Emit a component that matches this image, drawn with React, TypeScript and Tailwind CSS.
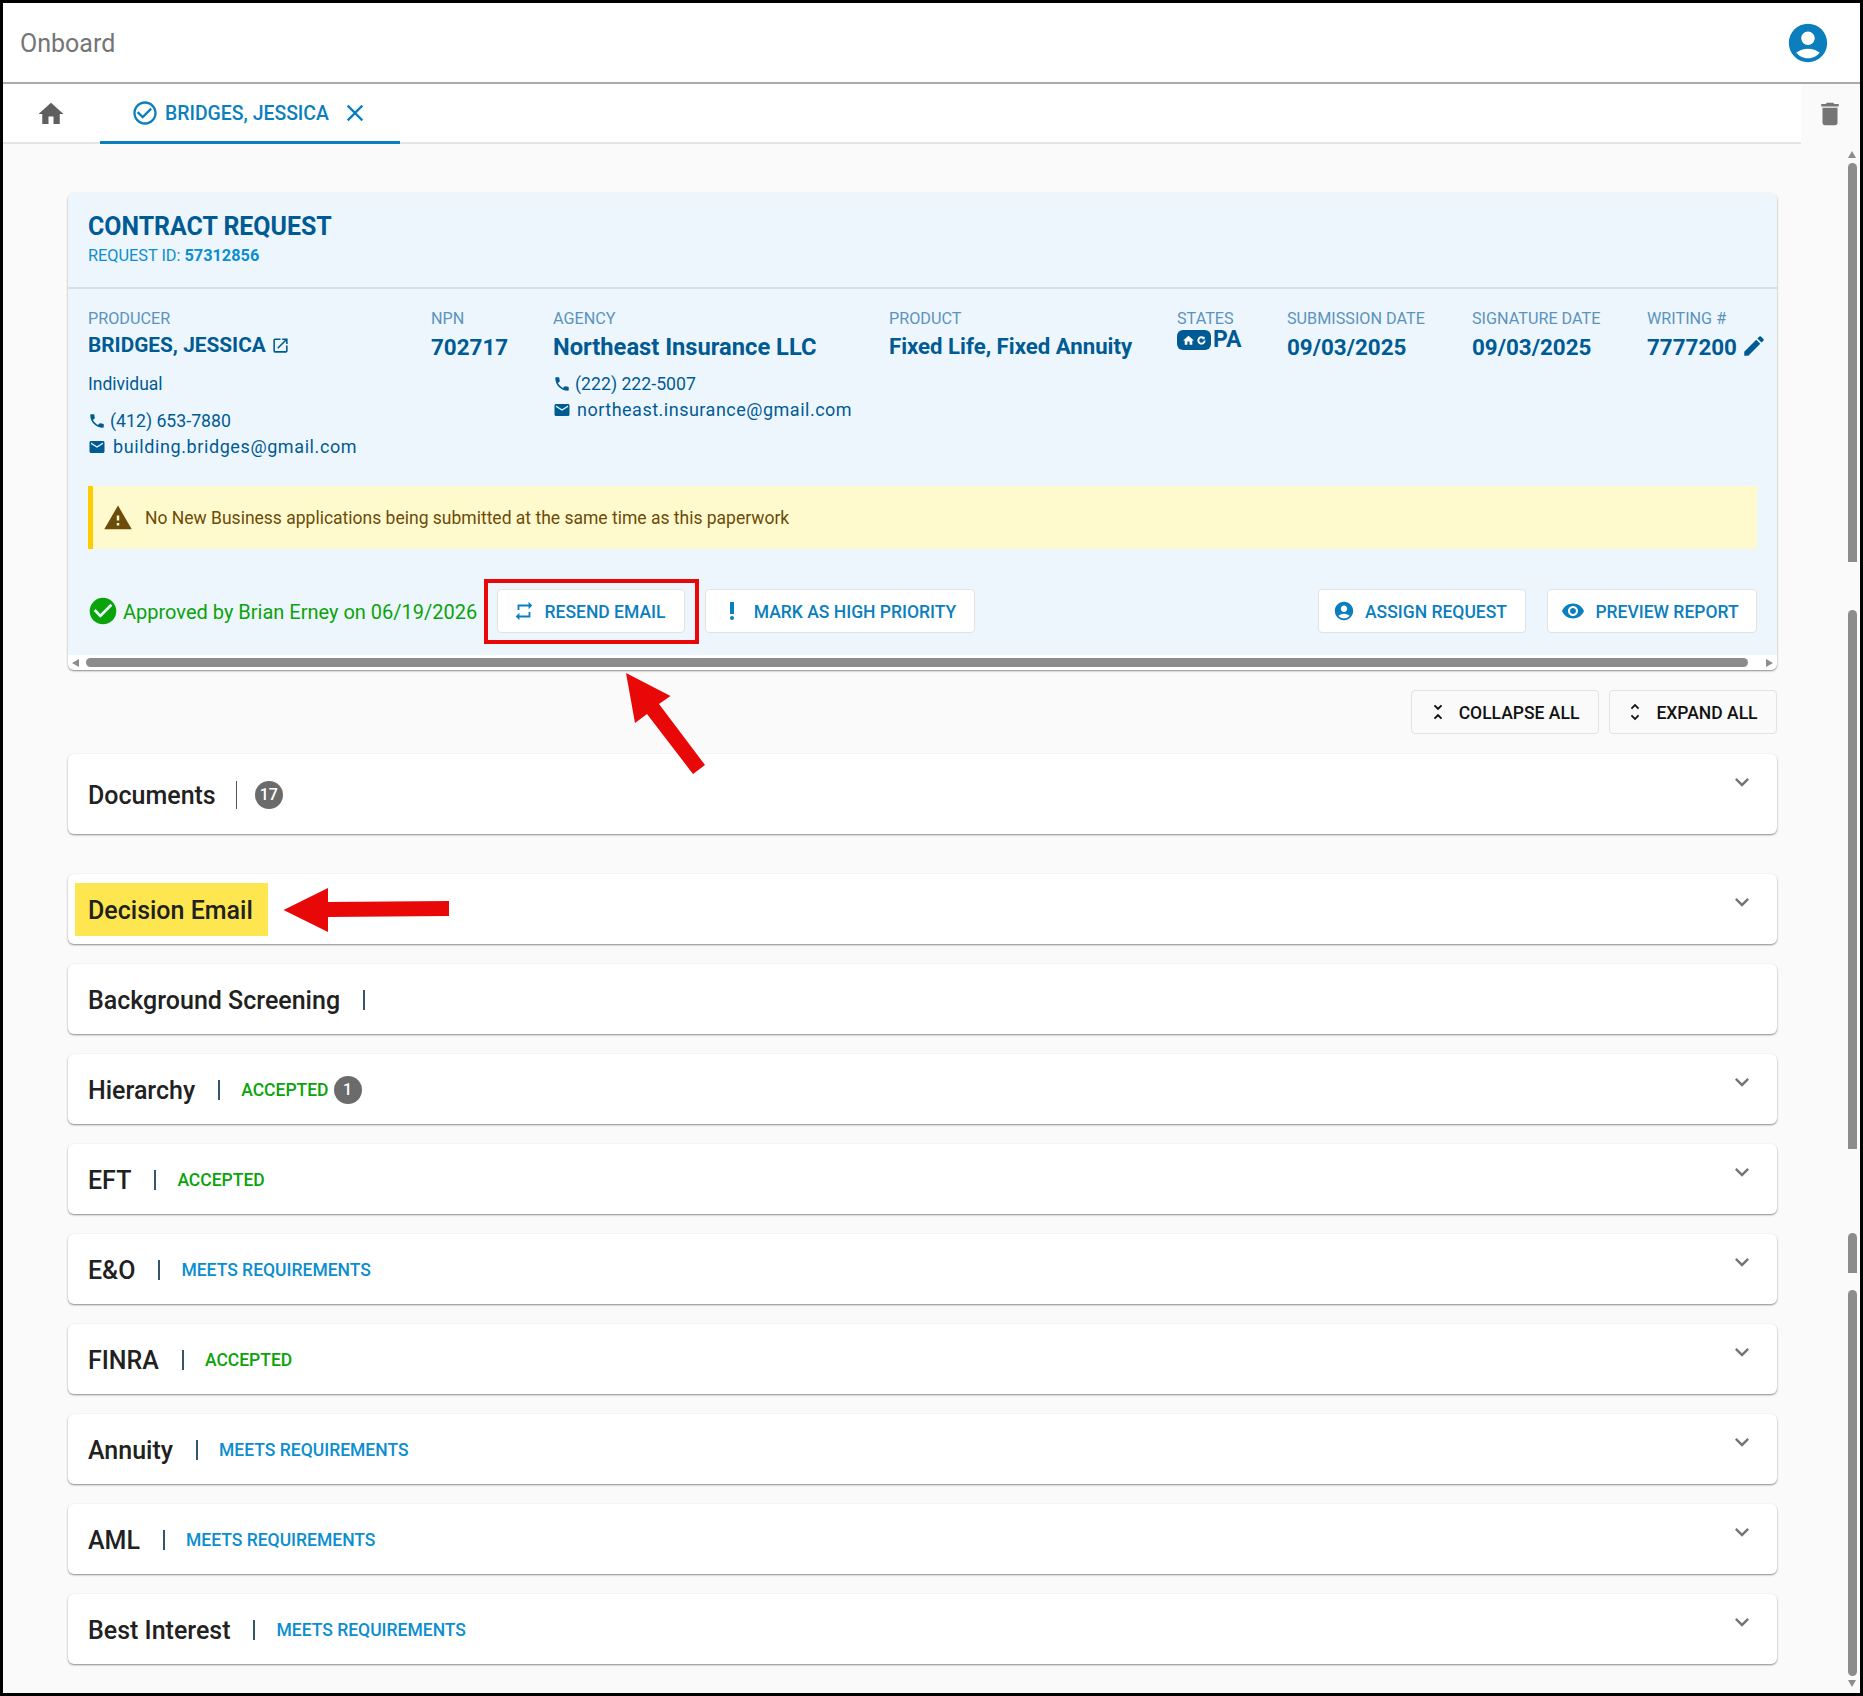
import React from "react";
import {
  MdHome, MdDelete, MdAccountCircle, MdClose, MdCheckCircleOutline, MdOpenInNew, MdPhone, MdEmail, MdWarning,
  MdRepeat, MdPriorityHigh, MdVisibility, MdUnfoldLess, MdUnfoldMore, MdExpandMore, MdEdit, MdCheckCircle,
} from "react-icons/md";

const Label = ({ children }: { children: React.ReactNode }) => (
  <div className="text-[16.2px] leading-[18px] text-[#5b93bd] whitespace-nowrap pt-[1px] -mb-[1px]">{children}</div>
);

const Btn = ({ icon, text, w, dark }: { icon: React.ReactNode; text: string; w: string; dark?: boolean }) => (
  <button className={`${w} h-[44px] rounded-[4px] border border-[#e2e2e2] flex items-center justify-center gap-[10px] text-[17.5px] font-medium whitespace-nowrap shrink-0 pr-[4px] ${dark ? "text-[#111111] bg-[#fafafa]" : "text-[#0b7fbd] bg-white"}`}>
    {icon}
    <span className="pt-[2px]">{text}</span>
  </button>
);

type Row = { title: string; status?: string; kind?: "a" | "m"; badge?: string; noChevron?: boolean };

const rows: Row[] = [
  { title: "Background Screening", noChevron: true },
  { title: "Hierarchy", status: "ACCEPTED", kind: "a", badge: "1" },
  { title: "EFT", status: "ACCEPTED", kind: "a" },
  { title: "E&O", status: "MEETS REQUIREMENTS", kind: "m" },
  { title: "FINRA", status: "ACCEPTED", kind: "a" },
  { title: "Annuity", status: "MEETS REQUIREMENTS", kind: "m" },
  { title: "AML", status: "MEETS REQUIREMENTS", kind: "m" },
  { title: "Best Interest", status: "MEETS REQUIREMENTS", kind: "m" },
];

const Chevron = () => <MdExpandMore className="self-start mt-[14px] text-[#757575] shrink-0" size={28} />;

const Badge = ({ n }: { n: string }) => (
  <span className="w-[28px] h-[28px] rounded-full bg-[#6b6b6b] text-white text-[16px] font-medium flex items-center justify-center">{n}</span>
);

const AccRow = ({ r }: { r: Row }) => (
  <div className="h-[70px] bg-white rounded-[6px] shadow-[0_1px_2px_rgba(0,0,0,0.45)] flex items-center justify-between pl-5 pr-[21px]">
    <div className="flex items-center pt-[2px]">
      <span className="text-[25px] font-medium text-[#212121] pt-[2px]">{r.title}</span>
      <span className="w-[2px] h-[20px] bg-[#33556e] ml-[23px] mr-[21px]" />
      {r.status && (
        <span className={`text-[17.5px] font-medium ${r.kind === "a" ? "text-[#0aa30a]" : "text-[#0b8ecf]"}`}>{r.status}</span>
      )}
      {r.badge && <span className="ml-[5px]"><Badge n={r.badge} /></span>}
    </div>
    {!r.noChevron && <Chevron />}
  </div>
);

const Bar = ({ className }: { className: string }) => <div className={`absolute bg-[#8c8c8c] ${className}`} />;

export default function App() {
  return (
    <div className="relative w-[1863px] h-[1696px] border-[3px] border-black bg-[#fafafa] flex flex-col overflow-hidden font-['Roboto',sans-serif]">
      <header className="h-[81px] shrink-0 bg-white border-b-2 border-[#aaaaaa] flex items-center justify-between pl-[17px] pr-[29px]">
        <span className="text-[25px] text-[#757575] pt-[2px]">Onboard</span>
        <MdAccountCircle size={46} className="text-[#0b7fbd] mt-[1px]" />
      </header>

      <nav className="h-[60px] shrink-0 bg-white flex items-stretch border-b-2 border-[#e4e4e4] mr-[59px] relative">
        <div className="w-[97px] flex items-center justify-center pr-[2px] pt-[2px]">
          <MdHome size={30} className="text-[#5f5f5f]" />
        </div>
        <div className="w-[300px] flex items-center pl-[31px] gap-[6px] border-b-[3px] border-[#0b7fbd] -mb-[2px] text-[#0b7fbd]">
          <MdCheckCircleOutline size={28} />
          <span className="text-[19.4px] font-medium whitespace-nowrap pt-[2px]">BRIDGES, JESSICA</span>
          <MdClose size={28} className="ml-[6px]" />
        </div>
      </nav>
      <MdDelete size={30} className="absolute right-[15px] top-[96px] text-[#757575]" />

      <main className="flex-1 pl-[65px] pr-[83px] pt-[49px]">
        <section className="rounded-[6px] bg-white shadow-[0_1px_2px_rgba(0,0,0,0.45)] relative h-[477px]">
          <div className="h-[462px] bg-[#eef6fd] rounded-t-[6px]">
            <div className="h-[96px] border-b-2 border-[#d5dfe7] px-5 pt-[18px]">
              <div className="text-[24.9px] leading-[32px] font-bold text-[#005b94]">CONTRACT REQUEST</div>
              <div className="text-[16.3px] leading-[20px] mt-[3px] font-normal text-[#0b8ecf]">REQUEST ID: <span className="font-bold">57312856</span></div>
            </div>

            <div className="flex px-5 pt-[20px] h-[197px] text-[#005b94]">
              <div className="w-[343px] shrink-0">
                <Label>PRODUCER</Label>
                <div className="flex items-center gap-[5px] mt-[3px] text-[20.8px] leading-[30px] font-bold">
                  BRIDGES, JESSICA <MdOpenInNew size={19} />
                </div>
                <div className="text-[17.5px] leading-[24px] mt-[12px]">Individual</div>
                <div className="flex items-center gap-[4px] text-[17.7px] leading-[24px] mt-[13px]"><MdPhone size={18} /> (412) 653-7880</div>
                <div className="flex items-center gap-[7px] text-[18px] tracking-[0.6px] leading-[24px] mt-[2px]"><MdEmail size={18} /> building.bridges@gmail.com</div>
              </div>
              <div className="w-[122px] shrink-0">
                <Label>NPN</Label>
                <div className="text-[22.4px] leading-[32px] mt-[4px] font-bold">702717</div>
              </div>
              <div className="w-[336px] shrink-0">
                <Label>AGENCY</Label>
                <div className="text-[23.7px] leading-[32px] mt-[4px] font-bold">Northeast Insurance LLC</div>
                <div className="flex items-center gap-[4px] text-[17.7px] leading-[24px] mt-[9px]"><MdPhone size={18} /> (222) 222-5007</div>
                <div className="flex items-center gap-[6px] text-[18px] tracking-[0.5px] leading-[24px] mt-[2px]"><MdEmail size={18} /> northeast.insurance@gmail.com</div>
              </div>
              <div className="w-[288px] shrink-0">
                <Label>PRODUCT</Label>
                <div className="text-[22.2px] leading-[32px] mt-[3px] font-bold whitespace-nowrap">Fixed Life, Fixed Annuity</div>
              </div>
              <div className="w-[110px] shrink-0">
                <Label>STATES</Label>
                <div className="flex items-start gap-[2px] mt-[3px]">
                  <span className="w-[34px] h-[20px] rounded-[6px] bg-[#005b94] text-white flex items-center justify-center gap-[1px]">
                    <MdHome size={13} />
                    <svg width="11" height="11" viewBox="0 0 24 24" fill="none" stroke="white" strokeWidth="4"><path d="M19 12a7 7 0 1 1-2-5" /><path d="M19 3v6h-6" fill="white" stroke="none" /></svg>
                  </span>
                  <span className="text-[23px] leading-[20px] font-bold">PA</span>
                </div>
              </div>
              <div className="w-[185px] shrink-0">
                <Label>SUBMISSION DATE</Label>
                <div className="text-[22.4px] leading-[32px] mt-[4px] font-bold">09/03/2025</div>
              </div>
              <div className="w-[175px] shrink-0">
                <Label>SIGNATURE DATE</Label>
                <div className="text-[22.4px] leading-[32px] mt-[4px] font-bold">09/03/2025</div>
              </div>
              <div className="shrink-0">
                <Label>WRITING #</Label>
                <div className="flex items-center gap-[4px] text-[22.4px] leading-[32px] mt-[4px] font-bold whitespace-nowrap">7777200 <MdEdit size={26} className="-mt-[3px]" /></div>
              </div>
            </div>

            <div className="mx-5 h-[63px] border-l-[5px] border-[#ffcc00] bg-[#fffacd] flex items-center pl-[10px] gap-[12px] text-[17.5px] text-[#6b4c0a]">
              <MdWarning size={30} className="text-[#6b4c0a]" />
              <span className="pt-[2px]">No New Business applications being submitted at the same time as this paperwork</span>
            </div>

            <div className="flex items-center px-5 mt-[40px]">
              <MdCheckCircle size={32} className="text-[#0aa30a] -ml-[1px]" />
              <span className="text-[20px] text-[#0aa30a] ml-[4px] w-[374px] whitespace-nowrap pt-[1px]">Approved by Brian Erney on 06/19/2026</span>
              <Btn w="w-[188px]" icon={<MdRepeat size={22} />} text="RESEND EMAIL" />
              <span className="w-[20px]" />
              <Btn w="w-[270px]" icon={<MdPriorityHigh size={24} />} text="MARK AS HIGH PRIORITY" />
              <span className="flex-1" />
              <Btn w="w-[208px]" icon={<MdAccountCircle size={22} />} text="ASSIGN REQUEST" />
              <span className="w-[21px]" />
              <Btn w="w-[210px]" icon={<MdVisibility size={24} />} text="PREVIEW REPORT" />
            </div>
          </div>
          {/* horizontal scrollbar */}
          <div className="absolute left-[18px] right-[29px] top-[465px] h-[9px] rounded-full bg-[#8c8c8c]" />
          <div className="absolute left-[4px] top-[466px] w-0 h-0 border-y-[4px] border-y-transparent border-r-[7px] border-r-[#8c8c8c]" />
          <div className="absolute right-[4px] top-[466px] w-0 h-0 border-y-[4px] border-y-transparent border-l-[7px] border-l-[#8c8c8c]" />
          {/* red box */}
          <div className="absolute left-[416px] top-[386px] w-[215px] h-[65px] border-[4px] border-[#e80808]" />
        </section>

        <div className="flex justify-end gap-[10px] mt-[20px]">
          <Btn dark w="w-[188px]" icon={<MdUnfoldLess size={22} />} text="COLLAPSE ALL" />
          <Btn dark w="w-[168px]" icon={<MdUnfoldMore size={22} />} text="EXPAND ALL" />
        </div>

        <div className="mt-[20px] h-[80px] bg-white rounded-[6px] shadow-[0_1px_2px_rgba(0,0,0,0.45)] flex items-center justify-between pl-5 pr-[21px]">
          <div className="flex items-center pt-[2px]">
            <span className="text-[25px] font-medium text-[#212121] pt-[2px]">Documents</span>
            <span className="w-px h-[28px] bg-[#555555] ml-[20px] mr-[18px]" />
            <Badge n="17" />
          </div>
          <Chevron />
        </div>

        <div className="mt-[40px] h-[70px] bg-white rounded-[6px] shadow-[0_1px_2px_rgba(0,0,0,0.45)] flex items-center justify-between pl-[7px] pr-[21px]">
          <span className="h-[53px] w-[193px] bg-[#fde64f] flex items-center pl-[13px] pt-[3px] text-[25px] font-medium text-[#212121]">Decision Email</span>
          <Chevron />
        </div>

        <div className="mt-[20px] flex flex-col gap-[20px]">
          {rows.map((r) => <AccRow key={r.title} r={r} />)}
        </div>
      </main>

      {/* vertical scrollbar pieces */}
      <div className="absolute left-[1845px] top-[148px] w-0 h-0 border-x-[4.5px] border-x-transparent border-b-[7px] border-b-[#8c8c8c]" />
      <Bar className="left-[1845px] top-[160px] w-[9px] h-[399px] rounded-t-full" />
      <Bar className="left-[1845px] top-[607px] w-[9px] h-[539px] rounded-t-full" />
      <Bar className="left-[1845px] top-[1230px] w-[9px] h-[40px] rounded-t-full" />
      <Bar className="left-[1845px] top-[1287px] w-[9px] h-[386px] rounded-full" />
      <div className="absolute left-[1845px] top-[1677px] w-0 h-0 border-x-[4.5px] border-x-transparent border-t-[7px] border-t-[#8c8c8c]" />

      {/* annotation arrows */}
      <svg className="absolute left-[-3px] top-[-3px] pointer-events-none" width="1863" height="1696">
        <polygon fill="#e80808" points="626,673 635,723 647,714 693,774 705,765 659,704 670.5,696" />
        <polygon fill="#e80808" points="283.5,910 328,888 328,902 449,901 449,916 328,917 328,932" />
      </svg>
    </div>
  );
}
